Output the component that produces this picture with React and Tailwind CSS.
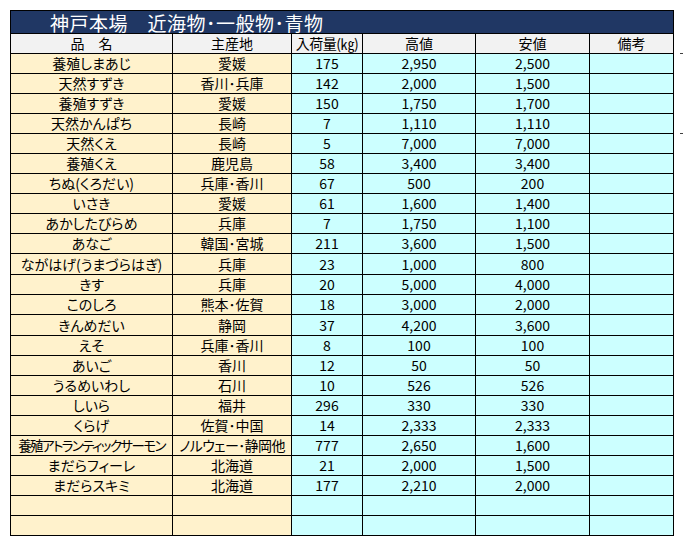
import React from "react"

const rows = [
    ["養殖しまあじ", "愛媛", "175", "2,950", "2,500"],
    ["天然すずき", "香川･兵庫", "142", "2,000", "1,500"],
    ["養殖すずき", "愛媛", "150", "1,750", "1,700"],
    ["天然かんぱち", "長崎", "7", "1,110", "1,110"],
    ["天然くえ", "長崎", "5", "7,000", "7,000"],
    ["養殖くえ", "鹿児島", "58", "3,400", "3,400"],
    ["ちぬ(くろだい)", "兵庫･香川", "67", "500", "200"],
    ["いさき", "愛媛", "61", "1,600", "1,400"],
    ["あかしたびらめ", "兵庫", "7", "1,750", "1,100"],
    ["あなご", "韓国･宮城", "211", "3,600", "1,500"],
    ["ながはげ(うまづらはぎ)", "兵庫", "23", "1,000", "800"],
    ["きす", "兵庫", "20", "5,000", "4,000"],
    ["このしろ", "熊本･佐賀", "18", "3,000", "2,000"],
    ["きんめだい", "静岡", "37", "4,200", "3,600"],
    ["えそ", "兵庫･香川", "8", "100", "100"],
    ["あいご", "香川", "12", "50", "50"],
    ["うるめいわし", "石川", "10", "526", "526"],
    ["しいら", "福井", "296", "330", "330"],
    ["くらげ", "佐賀･中国", "14", "2,333", "2,333"],
    ["養殖アトランティックサーモン", "ノルウェー･静岡他", "777", "2,650", "1,600"],
    ["まだらフィーレ", "北海道", "21", "2,000", "1,500"],
    ["まだらスキミ", "北海道", "177", "2,210", "2,000"],
    ["", "", "", "", ""],
    ["", "", "", "", ""],
]

// rows that came out one pixel taller in the sheet
const tallRows = [10, 13]

const cell = "border-r border-b border-black flex items-center justify-center whitespace-nowrap overflow-hidden leading-[17px]"

export default function App(){
    return(
        <div className="min-h-[546px] bg-white pt-[10px] pl-[10px] flex flex-row items-start text-black text-[14px] [font-family:'Noto_Sans_CJK_JP','Noto_Sans',sans-serif] [font-feature-settings:'palt']">
            <div className="border-l border-t border-black w-[664px] grid grid-cols-[162px_119px_71px_113px_114px_84px]">
                <div className="col-span-6 h-[23px] bg-[#203764] border-r border-b border-black text-white text-[19px] leading-none flex items-center pl-[39px] tracking-[0.5px]">
                    神戸本場　近海物･一般物･青物
                </div>
                {["品　名", "主産地", "入荷量(㎏)", "高値", "安値", "備考"].map((h, i) => (
                    <div key={i} className={cell + " h-[20px] bg-[#f2f2f2]" + (i === 2 ? " tracking-[-0.5px]" : "")}>{h}</div>
                ))}
                {rows.map((r, idx) => {
                    const h = tallRows.includes(idx) ? " h-[21px]" : " h-[20px]"
                    return (
                        <React.Fragment key={idx}>
                            <div className={cell + h + " bg-[#fff2cc]" + (r[0].length > 12 ? " text-[13.5px] tracking-[-1.6px]" : "")}>{r[0]}</div>
                            <div className={cell + h + " bg-[#fff2cc]" + (r[1].length > 6 ? " tracking-[-0.6px]" : "")}>{r[1]}</div>
                            <div className={cell + h + " bg-[#ccffff]"}>{r[2]}</div>
                            <div className={cell + h + " bg-[#ccffff]"}>{r[3]}</div>
                            <div className={cell + h + " bg-[#ccffff]"}>{r[4]}</div>
                            <div className={cell + h + " bg-[#ccffff]"}></div>
                        </React.Fragment>
                    )
                })}
            </div>
            <div className="flex flex-col ml-[6px] pt-[43px] gap-[79px]">
                <div className="w-[3px] h-[1px] bg-[#404040]"></div>
                <div className="w-[3px] h-[1px] bg-[#404040]"></div>
            </div>
        </div>
    )
}
